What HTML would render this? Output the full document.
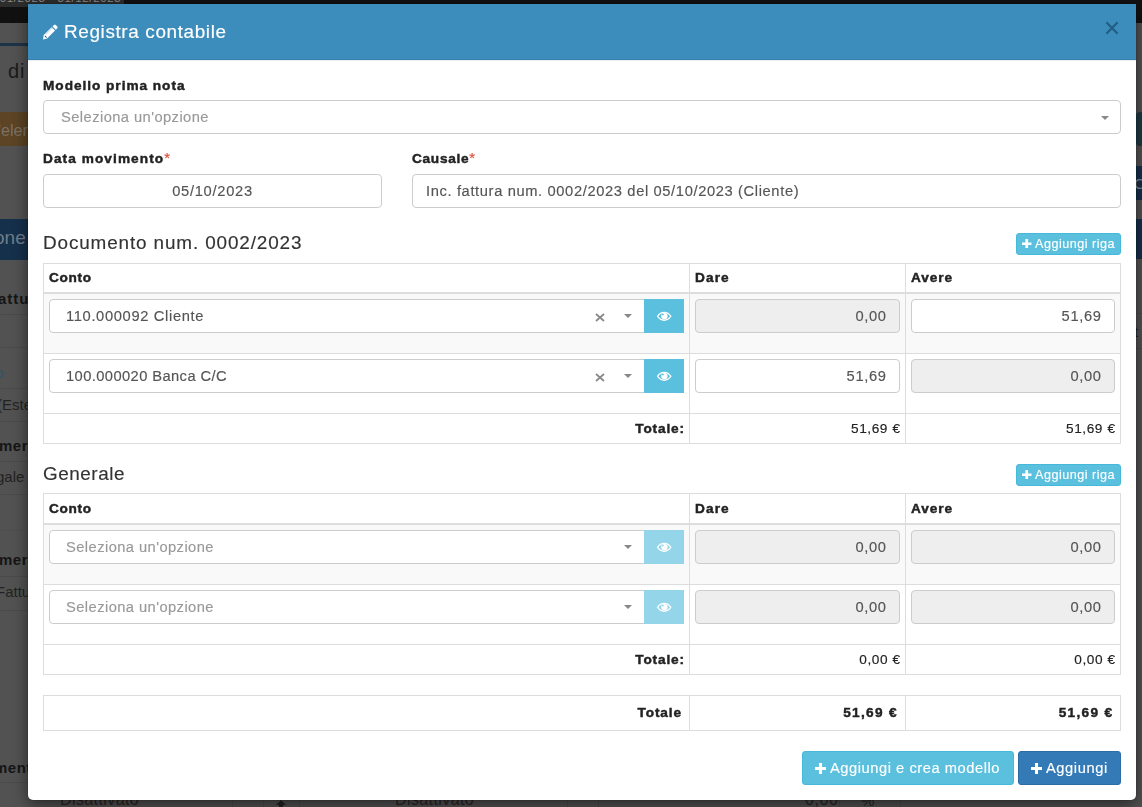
<!DOCTYPE html>
<html><head><meta charset="utf-8">
<style>
*{box-sizing:border-box;margin:0;padding:0}
html,body{width:1142px;height:807px;overflow:hidden}
body{position:relative;background:#525252;font-family:"Liberation Sans",sans-serif;color:#333}
.a{position:absolute;white-space:nowrap}
#modal{will-change:transform;position:absolute;left:28px;top:4px;width:1108px;height:796px;background:#fff;border-radius:0 0 5px 5px;box-shadow:0 0 0 1px rgba(0,0,0,.08),0 5px 15px rgba(0,0,0,.5);overflow:hidden}
#mh{position:absolute;left:0;top:0;width:1108px;height:56px;background:#3c8dbc;color:#fff;box-shadow:inset 0 -1px 0 #3a80ae,0 1px 0 #e6f0f6}
.lbl{color:#222}
.req{color:#dd4b39}
.inp{position:absolute;height:34px;border:1px solid #ccc;border-radius:4px;background:#fff;color:#555;white-space:nowrap;line-height:31px}
.ro{background:#eee}
.ph{color:#999}
.caret{position:absolute;width:0;height:0;border-left:4px solid transparent;border-right:4px solid transparent;border-top:4px solid #888}
.btn{position:absolute;color:#fff;white-space:nowrap;border-radius:3px}
.info{background:#5bc0de;border:1px solid #46b8da}
.prim{background:#337ab7;border:1px solid #2e6da4}
</style></head><body>
<div id="bg" style="position:absolute;left:0;top:0;width:1142px;height:807px;overflow:hidden"><div style="position:absolute;left:0px;top:0px;width:1142px;height:23px;background:#111;"></div><div style="position:absolute;left:0px;top:0px;width:124px;height:7px;background:#2d2d2d;"></div><div class="a" style="left:-4px;top:-8.5px;font-size:11.5px;letter-spacing:.6px;line-height:12px;color:#8a8a8a">/01/2023 - 31/12/2023</div><div style="position:absolute;left:0px;top:23px;width:1142px;height:784px;background:#525252;"></div><div style="position:absolute;left:0px;top:43px;width:28px;height:3px;background:#1d3347;"></div><div class="a" style="left:8px;top:60px;font-size:20px;line-height:23px;color:#1a1a1a;letter-spacing:1px">di</div><div style="position:absolute;left:0px;top:112px;width:28px;height:34px;background:#5c4424;"></div><div class="a" style="left:-2px;top:122px;font-size:16px;line-height:18px;color:#7a7164;">'elenco</div><div style="position:absolute;left:0px;top:219px;width:28px;height:41px;background:#15304a;"></div><div class="a" style="left:-6px;top:227px;font-size:19px;line-height:22px;color:#6f7c8a;">one</div><div class="a" style="left:-2px;top:290px;font-size:15px;line-height:17px;color:#151515;font-weight:bold;letter-spacing:1px">attu</div><div style="position:absolute;left:0px;top:314px;width:28px;height:1px;background:#4a4a4a;"></div><div style="position:absolute;left:0px;top:347px;width:28px;height:1px;background:#4a4a4a;"></div><div style="position:absolute;left:0px;top:388px;width:28px;height:1px;background:#4a4a4a;"></div><div style="position:absolute;left:0px;top:421px;width:28px;height:1px;background:#4a4a4a;"></div><div style="position:absolute;left:0px;top:461px;width:28px;height:1px;background:#4a4a4a;"></div><div style="position:absolute;left:0px;top:494px;width:28px;height:1px;background:#4a4a4a;"></div><div style="position:absolute;left:0px;top:576px;width:28px;height:1px;background:#4a4a4a;"></div><div style="position:absolute;left:0px;top:610px;width:28px;height:1px;background:#4a4a4a;"></div><div style="position:absolute;left:0px;top:782px;width:28px;height:1px;background:#4a4a4a;"></div><div style="position:absolute;left:0px;top:530px;width:28px;height:1px;background:#4e4e4e;"></div><div class="a" style="left:-4px;top:365px;font-size:13px;line-height:15px;color:#2b5575;">o</div><div class="a" style="left:-3px;top:396px;font-size:15px;line-height:17px;color:#222;">(Este</div><div class="a" style="left:-1px;top:437px;font-size:15px;line-height:17px;color:#151515;font-weight:bold;letter-spacing:.5px">mer</div><div class="a" style="left:-4px;top:468px;font-size:15px;line-height:17px;color:#222;">gale</div><div class="a" style="left:-1px;top:551px;font-size:15px;line-height:17px;color:#151515;font-weight:bold;letter-spacing:.5px">mer</div><div class="a" style="left:-4px;top:583px;font-size:15px;line-height:17px;color:#222;">Fattu</div><div class="a" style="left:-6px;top:759px;font-size:15px;line-height:17px;color:#151515;font-weight:bold;letter-spacing:.5px">ment</div><div style="position:absolute;left:1136px;top:112px;width:14px;height:34px;background:#1c3a44;border-radius:4px"></div><div style="position:absolute;left:1136px;top:166px;width:6px;height:34px;background:#15304a;"></div><div class="a" style="left:1134px;top:175px;font-size:15px;line-height:17px;color:#7f8d99;">C</div><div style="position:absolute;left:1136px;top:219px;width:6px;height:40px;background:#15304a;"></div><div style="position:absolute;left:1136px;top:313px;width:6px;height:1px;background:#4a4a4a;"></div><div style="position:absolute;left:1136px;top:348px;width:6px;height:1px;background:#4a4a4a;"></div><div class="a" style="left:1134px;top:323px;font-size:15px;line-height:17px;color:#222;">t</div><div class="a" style="left:60px;top:791px;font-size:16px;line-height:18px;color:#2e2424;letter-spacing:.4px">Disattivato</div><div class="a" style="left:395px;top:791px;font-size:16px;line-height:18px;color:#2e2424;letter-spacing:.4px">Disattivato</div><div style="position:absolute;left:232px;top:800px;width:1px;height:7px;background:#4a4a4a;"></div><div style="position:absolute;left:263px;top:800px;width:1px;height:7px;background:#4a4a4a;"></div><div style="position:absolute;left:299px;top:800px;width:1px;height:7px;background:#4a4a4a;"></div><div style="position:absolute;left:567px;top:800px;width:1px;height:7px;background:#4a4a4a;"></div><div style="position:absolute;left:598px;top:800px;width:1px;height:7px;background:#4a4a4a;"></div><div style="position:absolute;left:839px;top:800px;width:1px;height:7px;background:#4a4a4a;"></div><div style="position:absolute;left:900px;top:800px;width:1px;height:7px;background:#4a4a4a;"></div><div class="a" style="left:805px;top:791px;font-size:16px;line-height:18px;color:#262626;letter-spacing:.6px">0,00</div><div class="a" style="left:861px;top:792px;font-size:15px;line-height:17px;color:#262626;">%</div><svg style="position:absolute;left:276px;top:800px" width="10" height="8" viewBox="0 0 10 8"><path d="M5 0L10 5H7V8H3V5H0Z" fill="#222"/></svg></div>
<div id="modal">
<div id="mh">
<svg class="a" style="left:14px;top:20px" width="17" height="16" viewBox="42 24 17 16"><path d="M43.70 35.10 L51.65 27.15 L55.05 30.55 L47.10 38.50 L43.00 39.40Z M52.50 26.40 L54.15 24.75 L55.50 24.70 L57.55 26.75 L57.50 28.10 L55.85 29.75Z" fill="#fff"/><path d="M46.00 34.00 L52.25 27.75 L52.55 28.05 L46.30 34.30Z" fill="#8dbbd6"/><path d="M44.60 36.30 L45.30 35.60 L47.00 37.30 L46.30 38.00Z" fill="#2f6688"/></svg>
<div class="a" style="left:36px;top:17px;line-height:22px"><span style="font-size:18.90px;letter-spacing:0.634px;-webkit-text-stroke:0.15px currentColor;">Registra contabile</span></div>
<svg class="a" style="left:1077px;top:17px" width="14" height="14" viewBox="0 0 14 14"><path d="M1.3 1.3L12.7 12.7M12.7 1.3L1.3 12.7" stroke="#215d84" stroke-width="2.1"/></svg>
</div>
<div class="a" style="left:15px;top:73px;line-height:16px;color:#222"><span style="font-size:13.65px;letter-spacing:0.968px;font-weight:bold;-webkit-text-stroke:0.45px currentColor;">Modello prima nota</span></div>
<div class="inp" style="position:absolute;left:15px;top:96px;width:1078px;height:34px;padding-left:17px"><span class="ph"><span style="font-size:14.70px;letter-spacing:0.437px;-webkit-text-stroke:0.15px currentColor;">Seleziona un&#x27;opzione</span></span><span class="caret" style="right:11px;top:15px"></span></div>
<div class="a" style="left:15px;top:146px;line-height:16px;color:#222"><span style="font-size:13.65px;letter-spacing:1.076px;font-weight:bold;-webkit-text-stroke:0.45px currentColor;">Data movimento</span><span class="req"><span style="font-size:14.70px;letter-spacing:1.280px;-webkit-text-stroke:0.15px currentColor;">*</span></span></div>
<div class="inp" style="position:absolute;left:15px;top:170px;width:339px;height:34px;text-align:center"><span style="font-size:14.70px;letter-spacing:0.712px;-webkit-text-stroke:0.15px currentColor;">05/10/2023</span></div>
<div class="a" style="left:384px;top:146px;line-height:16px;color:#222"><span style="font-size:13.65px;letter-spacing:0.714px;font-weight:bold;-webkit-text-stroke:0.45px currentColor;">Causale</span><span class="req"><span style="font-size:14.70px;letter-spacing:1.280px;-webkit-text-stroke:0.15px currentColor;">*</span></span></div>
<div class="inp" style="position:absolute;left:384px;top:170px;width:709px;height:34px;padding-left:13px"><span style="font-size:14.70px;letter-spacing:0.629px;-webkit-text-stroke:0.15px currentColor;">Inc. fattura num. 0002/2023 del 05/10/2023 (Cliente)</span></div>
<div class="a" style="left:15px;top:228px;line-height:22px;color:#333"><span style="font-size:18.90px;letter-spacing:0.873px;-webkit-text-stroke:0.15px currentColor;">Documento num. 0002/2023</span></div>
<div class="btn info" style="position:absolute;left:988px;top:229px;width:105px;height:22px;line-height:18px;padding-left:18px"><svg width="9.5" height="9.5" viewBox="0 0 10 10" style="position:absolute;left:5px;top:4.6px"><path d="M3.6 0H6.4V3.6H10V6.4H6.4V10H3.6V6.4H0V3.6H3.6Z" fill="#fff"/></svg><span style="font-size:12.60px;letter-spacing:0.495px;-webkit-text-stroke:0.15px currentColor;">Aggiungi riga</span></div>
<div class="" style="position:absolute;left:15px;top:259px;width:1078px;height:181px;border:1px solid #ddd"></div>
<div class="" style="position:absolute;left:16px;top:290px;width:1076px;height:59px;background:#f9f9f9"></div>
<div class="" style="position:absolute;left:16px;top:288px;width:1076px;height:2px;background:#ddd"></div>
<div class="" style="position:absolute;left:16px;top:349px;width:1076px;height:1px;background:#ddd"></div>
<div class="" style="position:absolute;left:16px;top:409px;width:1076px;height:1px;background:#ddd"></div>
<div class="" style="position:absolute;left:661px;top:260px;width:1px;height:179px;background:#ddd"></div>
<div class="" style="position:absolute;left:877px;top:260px;width:1px;height:179px;background:#ddd"></div>
<div class="a" style="left:21px;top:264px;line-height:18px;color:#222"><span style="font-size:13.65px;letter-spacing:0.691px;font-weight:bold;-webkit-text-stroke:0.45px currentColor;">Conto</span></div>
<div class="a" style="left:667px;top:264px;line-height:18px;color:#222"><span style="font-size:13.65px;letter-spacing:1.110px;font-weight:bold;-webkit-text-stroke:0.45px currentColor;">Dare</span></div>
<div class="a" style="left:883px;top:264px;line-height:18px;color:#222"><span style="font-size:13.65px;letter-spacing:0.936px;font-weight:bold;-webkit-text-stroke:0.45px currentColor;">Avere</span></div>
<div class="inp" style="position:absolute;left:21px;top:295px;width:596px;height:34px;border-radius:4px 0 0 4px"><span style="padding-left:16px"><span style="font-size:14.70px;letter-spacing:0.655px;-webkit-text-stroke:0.15px currentColor;">110.000092 Cliente</span></span><svg width="10" height="9" viewBox="0 0 10 9" style="position:absolute;left:544.5px;top:12.6px"><path d="M1 1L9 8M9 1L1 8" stroke="#888" stroke-width="1.7"/></svg><span class="caret" style="left:574.3px;top:14px"></span></div>
<div class="" style="position:absolute;left:616px;top:295px;width:40px;height:34px;background:#5bc0de"><svg width="16" height="11" viewBox="0 0 16 11" style="position:absolute;left:12px;top:12px"><path d="M0.8 5.35C2.8 2.2 5.3 0.8 8.2 0.8C11.1 0.8 13.6 2.2 15.6 5.35C13.6 8.5 11.1 9.9 8.2 9.9C5.3 9.9 2.8 8.5 0.8 5.35ZM2.3 5.35C4 3.1 6 2.1 8.2 2.1C10.4 2.1 12.4 3.1 14.1 5.35C12.4 7.6 10.4 8.6 8.2 8.6C6 8.6 4 7.6 2.3 5.35Z" fill="#fff" fill-rule="evenodd"/><circle cx="8.4" cy="5.1" r="3.2" fill="#fff"/><circle cx="6.9" cy="3.6" r="0.9" fill="#5bc0de"/></svg></div>
<div class="inp ro" style="position:absolute;left:667px;top:295px;width:205px;height:34px;text-align:right;padding-right:13px"><span style="font-size:14.70px;letter-spacing:0.640px;-webkit-text-stroke:0.15px currentColor;margin-right:-0.640px;">0,00</span></div>
<div class="inp" style="position:absolute;left:883px;top:295px;width:204px;height:34px;text-align:right;padding-right:13px"><span style="font-size:14.70px;letter-spacing:0.659px;-webkit-text-stroke:0.15px currentColor;margin-right:-0.659px;">51,69</span></div>
<div class="inp" style="position:absolute;left:21px;top:355px;width:596px;height:34px;border-radius:4px 0 0 4px"><span style="padding-left:16px"><span style="font-size:14.70px;letter-spacing:0.415px;-webkit-text-stroke:0.15px currentColor;">100.000020 Banca C/C</span></span><svg width="10" height="9" viewBox="0 0 10 9" style="position:absolute;left:544.5px;top:12.6px"><path d="M1 1L9 8M9 1L1 8" stroke="#888" stroke-width="1.7"/></svg><span class="caret" style="left:574.3px;top:14px"></span></div>
<div class="" style="position:absolute;left:616px;top:355px;width:40px;height:34px;background:#5bc0de"><svg width="16" height="11" viewBox="0 0 16 11" style="position:absolute;left:12px;top:12px"><path d="M0.8 5.35C2.8 2.2 5.3 0.8 8.2 0.8C11.1 0.8 13.6 2.2 15.6 5.35C13.6 8.5 11.1 9.9 8.2 9.9C5.3 9.9 2.8 8.5 0.8 5.35ZM2.3 5.35C4 3.1 6 2.1 8.2 2.1C10.4 2.1 12.4 3.1 14.1 5.35C12.4 7.6 10.4 8.6 8.2 8.6C6 8.6 4 7.6 2.3 5.35Z" fill="#fff" fill-rule="evenodd"/><circle cx="8.4" cy="5.1" r="3.2" fill="#fff"/><circle cx="6.9" cy="3.6" r="0.9" fill="#5bc0de"/></svg></div>
<div class="inp" style="position:absolute;left:667px;top:355px;width:205px;height:34px;text-align:right;padding-right:13px"><span style="font-size:14.70px;letter-spacing:0.659px;-webkit-text-stroke:0.15px currentColor;margin-right:-0.659px;">51,69</span></div>
<div class="inp ro" style="position:absolute;left:883px;top:355px;width:204px;height:34px;text-align:right;padding-right:13px"><span style="font-size:14.70px;letter-spacing:0.640px;-webkit-text-stroke:0.15px currentColor;margin-right:-0.640px;">0,00</span></div>
<div class="a lbl" style="position:absolute;left:15px;top:410px;width:641px;height:29px;text-align:right;line-height:27px"><span style="font-size:13.65px;letter-spacing:0.829px;font-weight:bold;-webkit-text-stroke:0.45px currentColor;margin-right:-0.829px;">Totale:</span></div>
<div class="a" style="position:absolute;left:662px;top:410px;width:210px;height:29px;text-align:right;line-height:27px;color:#222"><span style="font-size:13.65px;letter-spacing:0.583px;-webkit-text-stroke:0.15px currentColor;margin-right:-0.583px;">51,69 €</span></div>
<div class="a" style="position:absolute;left:878px;top:410px;width:209px;height:29px;text-align:right;line-height:27px;color:#222"><span style="font-size:13.65px;letter-spacing:0.583px;-webkit-text-stroke:0.15px currentColor;margin-right:-0.583px;">51,69 €</span></div>
<div class="a" style="left:15px;top:459px;line-height:22px;color:#333"><span style="font-size:18.90px;letter-spacing:0.532px;-webkit-text-stroke:0.15px currentColor;">Generale</span></div>
<div class="btn info" style="position:absolute;left:988px;top:460px;width:105px;height:22px;line-height:18px;padding-left:18px"><svg width="9.5" height="9.5" viewBox="0 0 10 10" style="position:absolute;left:5px;top:4.6px"><path d="M3.6 0H6.4V3.6H10V6.4H6.4V10H3.6V6.4H0V3.6H3.6Z" fill="#fff"/></svg><span style="font-size:12.60px;letter-spacing:0.495px;-webkit-text-stroke:0.15px currentColor;">Aggiungi riga</span></div>
<div class="" style="position:absolute;left:15px;top:489px;width:1078px;height:182px;border:1px solid #ddd"></div>
<div class="" style="position:absolute;left:16px;top:521px;width:1076px;height:59px;background:#f9f9f9"></div>
<div class="" style="position:absolute;left:16px;top:519px;width:1076px;height:2px;background:#ddd"></div>
<div class="" style="position:absolute;left:16px;top:580px;width:1076px;height:1px;background:#ddd"></div>
<div class="" style="position:absolute;left:16px;top:640px;width:1076px;height:1px;background:#ddd"></div>
<div class="" style="position:absolute;left:661px;top:490px;width:1px;height:180px;background:#ddd"></div>
<div class="" style="position:absolute;left:877px;top:490px;width:1px;height:180px;background:#ddd"></div>
<div class="a" style="left:21px;top:495px;line-height:18px;color:#222"><span style="font-size:13.65px;letter-spacing:0.691px;font-weight:bold;-webkit-text-stroke:0.45px currentColor;">Conto</span></div>
<div class="a" style="left:667px;top:495px;line-height:18px;color:#222"><span style="font-size:13.65px;letter-spacing:1.110px;font-weight:bold;-webkit-text-stroke:0.45px currentColor;">Dare</span></div>
<div class="a" style="left:883px;top:495px;line-height:18px;color:#222"><span style="font-size:13.65px;letter-spacing:0.936px;font-weight:bold;-webkit-text-stroke:0.45px currentColor;">Avere</span></div>
<div class="inp" style="position:absolute;left:21px;top:526px;width:596px;height:34px;border-radius:4px 0 0 4px"><span class="ph" style="padding-left:16px"><span style="font-size:14.70px;letter-spacing:0.437px;-webkit-text-stroke:0.15px currentColor;">Seleziona un&#x27;opzione</span></span><span class="caret" style="left:574.3px;top:14px"></span></div>
<div class="" style="position:absolute;left:616px;top:526px;width:40px;height:34px;background:#94d5e9"><svg width="16" height="11" viewBox="0 0 16 11" style="position:absolute;left:12px;top:12px"><path d="M0.8 5.35C2.8 2.2 5.3 0.8 8.2 0.8C11.1 0.8 13.6 2.2 15.6 5.35C13.6 8.5 11.1 9.9 8.2 9.9C5.3 9.9 2.8 8.5 0.8 5.35ZM2.3 5.35C4 3.1 6 2.1 8.2 2.1C10.4 2.1 12.4 3.1 14.1 5.35C12.4 7.6 10.4 8.6 8.2 8.6C6 8.6 4 7.6 2.3 5.35Z" fill="#fff" fill-rule="evenodd"/><circle cx="8.4" cy="5.1" r="3.2" fill="#fff"/><circle cx="6.9" cy="3.6" r="0.9" fill="#94d5e9"/></svg></div>
<div class="inp ro" style="position:absolute;left:667px;top:526px;width:205px;height:34px;text-align:right;padding-right:13px"><span style="font-size:14.70px;letter-spacing:0.640px;-webkit-text-stroke:0.15px currentColor;margin-right:-0.640px;">0,00</span></div>
<div class="inp ro" style="position:absolute;left:883px;top:526px;width:204px;height:34px;text-align:right;padding-right:13px"><span style="font-size:14.70px;letter-spacing:0.640px;-webkit-text-stroke:0.15px currentColor;margin-right:-0.640px;">0,00</span></div>
<div class="inp" style="position:absolute;left:21px;top:586px;width:596px;height:34px;border-radius:4px 0 0 4px"><span class="ph" style="padding-left:16px"><span style="font-size:14.70px;letter-spacing:0.437px;-webkit-text-stroke:0.15px currentColor;">Seleziona un&#x27;opzione</span></span><span class="caret" style="left:574.3px;top:14px"></span></div>
<div class="" style="position:absolute;left:616px;top:586px;width:40px;height:34px;background:#94d5e9"><svg width="16" height="11" viewBox="0 0 16 11" style="position:absolute;left:12px;top:12px"><path d="M0.8 5.35C2.8 2.2 5.3 0.8 8.2 0.8C11.1 0.8 13.6 2.2 15.6 5.35C13.6 8.5 11.1 9.9 8.2 9.9C5.3 9.9 2.8 8.5 0.8 5.35ZM2.3 5.35C4 3.1 6 2.1 8.2 2.1C10.4 2.1 12.4 3.1 14.1 5.35C12.4 7.6 10.4 8.6 8.2 8.6C6 8.6 4 7.6 2.3 5.35Z" fill="#fff" fill-rule="evenodd"/><circle cx="8.4" cy="5.1" r="3.2" fill="#fff"/><circle cx="6.9" cy="3.6" r="0.9" fill="#94d5e9"/></svg></div>
<div class="inp ro" style="position:absolute;left:667px;top:586px;width:205px;height:34px;text-align:right;padding-right:13px"><span style="font-size:14.70px;letter-spacing:0.640px;-webkit-text-stroke:0.15px currentColor;margin-right:-0.640px;">0,00</span></div>
<div class="inp ro" style="position:absolute;left:883px;top:586px;width:204px;height:34px;text-align:right;padding-right:13px"><span style="font-size:14.70px;letter-spacing:0.640px;-webkit-text-stroke:0.15px currentColor;margin-right:-0.640px;">0,00</span></div>
<div class="a lbl" style="position:absolute;left:15px;top:641px;width:641px;height:29px;text-align:right;line-height:27px"><span style="font-size:13.65px;letter-spacing:0.829px;font-weight:bold;-webkit-text-stroke:0.45px currentColor;margin-right:-0.829px;">Totale:</span></div>
<div class="a" style="position:absolute;left:662px;top:641px;width:210px;height:29px;text-align:right;line-height:27px;color:#222"><span style="font-size:13.65px;letter-spacing:0.566px;-webkit-text-stroke:0.15px currentColor;margin-right:-0.566px;">0,00 €</span></div>
<div class="a" style="position:absolute;left:878px;top:641px;width:209px;height:29px;text-align:right;line-height:27px;color:#222"><span style="font-size:13.65px;letter-spacing:0.566px;-webkit-text-stroke:0.15px currentColor;margin-right:-0.566px;">0,00 €</span></div>
<div class="" style="position:absolute;left:15px;top:691px;width:1078px;height:36px;border:1px solid #ddd"></div>
<div class="" style="position:absolute;left:661px;top:692px;width:1px;height:34px;background:#ddd"></div>
<div class="" style="position:absolute;left:877px;top:692px;width:1px;height:34px;background:#ddd"></div>
<div class="a lbl" style="position:absolute;left:15px;top:692px;width:638px;height:34px;text-align:right;line-height:32px"><span style="font-size:13.65px;letter-spacing:0.858px;font-weight:bold;-webkit-text-stroke:0.45px currentColor;margin-right:-0.858px;">Totale</span></div>
<div class="a lbl" style="position:absolute;left:662px;top:692px;width:206.5px;height:34px;text-align:right;line-height:32px"><span style="font-size:13.65px;letter-spacing:1.307px;font-weight:bold;-webkit-text-stroke:0.45px currentColor;margin-right:-1.307px;">51,69 €</span></div>
<div class="a lbl" style="position:absolute;left:878px;top:692px;width:206px;height:34px;text-align:right;line-height:32px"><span style="font-size:13.65px;letter-spacing:1.307px;font-weight:bold;-webkit-text-stroke:0.45px currentColor;margin-right:-1.307px;">51,69 €</span></div>
<div class="btn info" style="position:absolute;left:774px;top:747px;width:212px;height:34px;line-height:32px;padding-left:27px"><svg width="11" height="11" viewBox="0 0 10 10" style="position:absolute;left:12px;top:11px"><path d="M3.6 0H6.4V3.6H10V6.4H6.4V10H3.6V6.4H0V3.6H3.6Z" fill="#fff"/></svg><span style="font-size:14.70px;letter-spacing:0.539px;-webkit-text-stroke:0.15px currentColor;">Aggiungi e crea modello</span></div>
<div class="btn prim" style="position:absolute;left:990px;top:747px;width:103px;height:34px;line-height:32px;padding-left:27px"><svg width="11" height="11" viewBox="0 0 10 10" style="position:absolute;left:12px;top:11px"><path d="M3.6 0H6.4V3.6H10V6.4H6.4V10H3.6V6.4H0V3.6H3.6Z" fill="#fff"/></svg><span style="font-size:14.70px;letter-spacing:0.568px;-webkit-text-stroke:0.15px currentColor;">Aggiungi</span></div>
</div>
</body></html>
